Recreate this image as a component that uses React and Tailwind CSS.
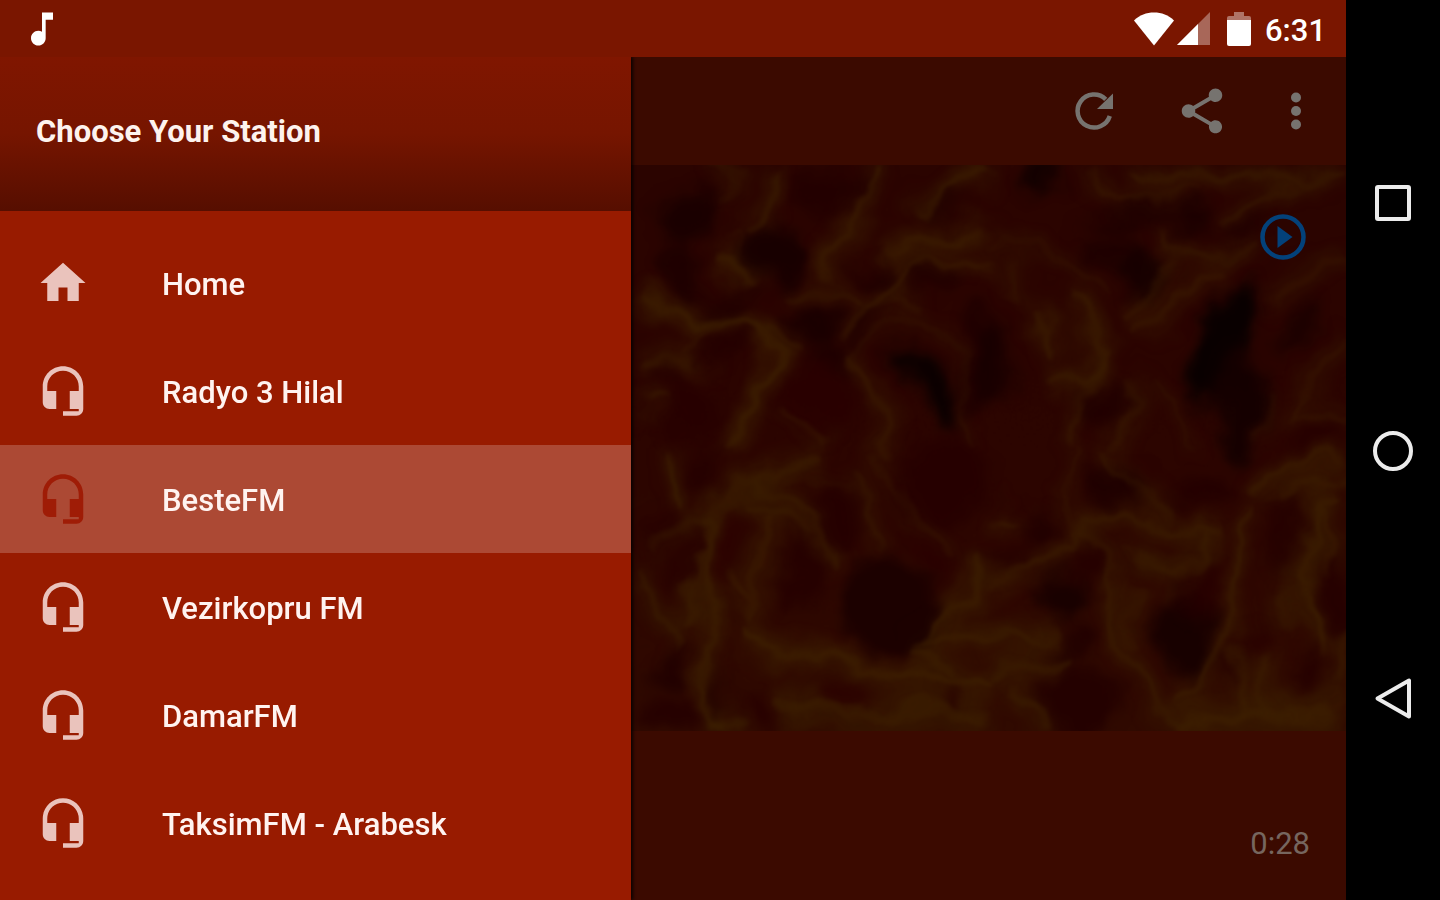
import React from "react";

const stations = [
  { name: "Home", icon: "home" },
  { name: "Radyo 3 Hilal", icon: "headset" },
  { name: "BesteFM", icon: "headset", selected: true },
  { name: "Vezirkopru FM", icon: "headset" },
  { name: "DamarFM", icon: "headset" },
  { name: "TaksimFM - Arabesk", icon: "headset" },
];

const iconPaths = {
  home: "M10 20v-6h4v6h5v-8h3L12 3 2 12h3v8z",
  headset:
    "M12 1c-4.97 0-9 4.03-9 9v7c0 1.66 1.34 3 3 3h3v-8H5v-2c0-3.87 3.13-7 7-7s7 3.13 7 7v2h-4v8h4v1h-7v2h6c1.66 0 3-1.34 3-3V10c0-4.97-4.03-9-9-9z",
  note: "M12 3v10.55c-.59-.34-1.27-.55-2-.55-2.21 0-4 1.79-4 4s1.79 4 4 4 4-1.79 4-4V7h4V3h-6z",
  share:
    "M18 16.08c-.76 0-1.44.3-1.96.77L8.91 12.7c.05-.23.09-.46.09-.7s-.04-.47-.09-.7l7.05-4.11c.54.5 1.25.81 2.04.81 1.66 0 3-1.34 3-3s-1.34-3-3-3-3 1.34-3 3c0 .24.04.47.09.7L8.04 9.81C7.5 9.31 6.79 9 6 9c-1.66 0-3 1.34-3 3s1.34 3 3 3c.79 0 1.5-.31 2.04-.81l7.12 4.16c-.05.21-.08.43-.08.65 0 1.61 1.31 2.92 2.92 2.92 1.61 0 2.92-1.31 2.92-2.92s-1.31-2.92-2.92-2.92z",
};

function Icon({ name, className }) {
  return (
    <svg viewBox="0 0 24 24" fill="currentColor" aria-hidden="true" className={className}>
      <path d={iconPaths[name]} />
    </svg>
  );
}

/* Each quadrant lists soft dark pockets [cx, cy, rx, ry, rotation, colour]
   and glowing wisps [path, stroke width, opacity]. */
const quadrants = [
  {
    x: 0,
    y: 0,
    pockets: [
      [170, 170, 100, 70, -20, "#170000"],
      [150, 340, 50, 90, 0, "#1c0000"],
      [440, 290, 110, 80, 20, "#150000"],
      [600, 90, 120, 60, 0, "#220000"],
      [930, 140, 70, 30, -20, "#200000"],
      [550, 490, 80, 50, 0, "#180000"],
      [600, 600, 70, 50, 30, "#1c0000"],
      [290, 420, 90, 40, -10, "#200000"],
      [300, 540, 90, 40, -20, "#230000"],
      [720, 350, 60, 25, 0, "#1c0000"],
      [900, 350, 90, 28, 5, "#1e0000"],
      [700, 500, 30, 80, 30, "#200000"],
      [900, 670, 45, 150, -35, "#050000"],
      [110, 650, 60, 28, -5, "#240000"],
      [170, 760, 90, 80, 0, "#270000"],
      [560, 720, 90, 110, 0, "#290000"],
      [1050, 600, 60, 160, 0, "#1e0000"],
    ],
    wisps: [
      ["M230 20 Q240 60 300 30 M320 20 Q300 90 280 140", 26, 0.6],
      ["M420 20 Q430 130 365 205", 44, 0.7],
      ["M740 20 Q700 140 660 200 Q620 300 590 360", 44, 0.8],
      ["M1080 30 Q900 90 860 170 M1080 210 Q880 230 740 300", 48, 0.8],
      ["M1080 320 Q900 280 810 340 Q740 390 690 470 L640 520", 30, 0.9],
      ["M260 270 Q340 310 350 370 M20 440 Q150 460 200 490 Q310 440 390 500 Q470 560 400 700 Q370 800 280 870", 50, 0.9],
      ["M390 480 Q440 540 500 560 M470 410 Q560 380 690 430", 26, 0.75],
      ["M180 580 Q230 480 310 465", 14, 0.8],
      ["M20 610 Q150 620 230 590 M20 740 L80 740", 50, 0.65],
      ["M680 620 Q690 560 760 500 Q910 450 970 560 Q1020 660 1030 870", 20, 0.5],
      ["M660 610 Q740 620 740 720 Q740 800 790 870 M480 760 Q560 800 590 860", 44, 0.6],
      ["M300 220 Q360 180 330 300", 16, 0.6],
      ["M760 430 Q800 410 850 440", 60, 0.4],
    ],
  },
  {
    x: 1080,
    y: 0,
    pockets: [
      [150, 55, 60, 40, 0, "#0d0000"],
      [460, 335, 80, 60, -20, "#140000"],
      [440, 170, 170, 30, -8, "#1c0000"],
      [610, 180, 35, 50, 0, "#190000"],
      [360, 270, 90, 40, -15, "#1c0000"],
      [700, 560, 80, 200, 25, "#030000"],
      [750, 730, 60, 180, 5, "#120000"],
      [930, 500, 25, 100, 35, "#150000"],
      [20, 620, 60, 110, 0, "#170000"],
      [340, 720, 70, 60, -20, "#200000"],
      [760, 210, 90, 20, -12, "#1c0000"],
      [980, 830, 80, 35, -10, "#260000"],
    ],
    wisps: [
      ["M420 20 Q450 70 530 60 Q700 30 900 60 Q1000 80 1070 50", 30, 0.85],
      ["M300 20 Q300 110 420 125 Q540 130 600 90", 34, 0.6],
      ["M900 80 Q800 130 680 190 M820 260 Q700 300 600 290 Q560 250 530 200", 28, 0.75],
      ["M0 255 L100 255 Q200 270 330 380", 28, 0.45],
      ["M560 290 Q520 370 400 460 M700 330 Q560 420 420 520", 46, 0.55],
      ["M110 450 Q190 500 210 590 M240 420 Q280 450 310 550 L350 580 Q330 640 180 670", 42, 0.8],
      ["M350 600 Q260 700 230 860 M410 660 Q430 750 380 860", 36, 0.6],
      ["M470 660 Q560 760 600 860 M820 690 Q830 750 800 830", 34, 0.35],
      ["M1070 280 Q960 350 850 420 M1070 550 Q950 650 900 760 L1070 780", 42, 0.45],
      ["M40 300 Q100 380 50 420", 60, 0.35],
    ],
  },
  {
    x: 0,
    y: 870,
    pockets: [
      [220, 70, 30, 80, 10, "#230000"],
      [620, 200, 70, 110, -20, "#240000"],
      [510, 360, 45, 120, 0, "#240000"],
      [780, 480, 170, 130, 15, "#190000"],
      [930, 90, 130, 140, 0, "#260000"],
      [170, 330, 35, 90, 15, "#270000"],
      [280, 290, 25, 110, 0, "#2b0000"],
      [120, 660, 60, 50, 0, "#200000"],
      [130, 790, 110, 50, 0, "#240000"],
      [275, 720, 20, 80, -15, "#200000"],
      [390, 790, 35, 70, -30, "#270000"],
      [650, 740, 90, 40, 0, "#2a0000"],
      [940, 750, 25, 50, 10, "#260000"],
      [90, 240, 40, 50, -30, "#270000"],
      [900, 330, 90, 40, 45, "#290000"],
    ],
    wisps: [
      ["M130 0 L130 190 M570 20 Q470 60 380 100 Q250 140 220 260 Q200 400 160 560", 40, 0.85],
      ["M220 230 Q250 480 220 620 Q230 760 300 830", 44, 0.9],
      ["M380 110 Q560 150 590 360 M330 150 Q460 180 540 260", 46, 0.7],
      ["M400 190 Q420 380 350 520 M320 360 L400 460", 80, 0.55],
      ["M80 280 L150 230 L210 240 M20 340 Q90 480 130 610", 34, 0.75],
      ["M330 560 Q500 640 650 620 Q760 700 1080 700", 52, 0.9],
      ["M740 0 Q830 160 960 330", 26, 0.55],
      ["M690 60 Q720 200 780 320", 44, 0.45],
      ["M1080 320 Q1000 500 890 580 L1080 560", 52, 0.85],
      ["M260 820 L330 820 M450 770 Q620 800 850 790 L1080 810", 84, 0.75],
      ["M480 90 Q620 70 690 130", 16, 0.6],
      ["M860 600 L960 670", 70, 0.7],
    ],
  },
  {
    x: 1080,
    y: 870,
    pockets: [
      [370, 110, 90, 50, 10, "#1d0000"],
      [150, 230, 50, 60, 0, "#200000"],
      [310, 330, 45, 70, -15, "#250000"],
      [230, 440, 80, 70, 30, "#150000"],
      [590, 560, 90, 120, -15, "#140000"],
      [620, 430, 45, 80, 0, "#270000"],
      [640, 130, 90, 50, 0, "#230000"],
      [890, 240, 30, 120, 0, "#230000"],
      [1030, 450, 50, 110, 0, "#240000"],
      [735, 640, 28, 60, 0, "#240000"],
      [260, 750, 130, 90, 20, "#220000"],
      [970, 660, 40, 60, 0, "#240000"],
      [790, 560, 50, 30, 0, "#280000"],
      [70, 330, 60, 30, -10, "#240000"],
      [250, 590, 80, 40, 0, "#200000"],
    ],
    wisps: [
      ["M270 0 Q210 100 240 200 L280 240", 22, 0.6],
      ["M360 0 Q370 100 490 140 L570 190", 30, 0.75],
      ["M270 220 Q350 180 450 200 Q560 240 690 240", 36, 0.85],
      ["M260 230 Q380 260 375 430 Q380 580 430 660 Q470 770 570 800", 30, 0.85],
      ["M420 300 Q500 310 560 400 Q620 320 640 250", 50, 0.75],
      ["M800 190 Q740 270 745 350 Q700 450 715 560 Q680 680 570 750", 34, 0.9],
      ["M790 140 Q830 50 1060 20 M850 160 Q900 90 1060 80", 42, 0.8],
      ["M1060 130 Q950 150 950 330 Q940 500 1000 600", 54, 0.85],
      ["M1000 170 L1010 380", 70, 0.5],
      ["M740 580 Q780 700 760 800 M820 610 L830 800", 62, 0.65],
      ["M560 820 L1060 790", 90, 0.85],
      ["M0 410 Q120 350 250 300 L250 230 M20 200 L80 210", 36, 0.8],
      ["M0 560 Q130 560 190 540 M0 680 Q100 620 240 640 M60 720 Q150 760 180 840", 56, 0.7],
      ["M440 400 Q420 500 440 600 M900 400 L890 560", 56, 0.45],
      ["M1060 520 L1050 720", 40, 0.7],
    ],
  },
];

function Wisps({ spread, strength }) {
  return quadrants.map((q) => (
    <g key={`${q.x}-${q.y}`} transform={`translate(${q.x} ${q.y})`}>
      {q.wisps.map(([d, width, opacity]) => (
        <path key={d} d={d} strokeWidth={width * spread} opacity={opacity * strength} />
      ))}
    </g>
  ));
}

const filterArea = {
  filterUnits: "userSpaceOnUse",
  x: -100,
  y: -100,
  width: 2360,
  height: 1940,
  colorInterpolationFilters: "sRGB",
};

function FlameArtwork() {
  return (
    <svg
      viewBox="3 15 2145 1698"
      preserveAspectRatio="xMidYMid slice"
      role="img"
      aria-label="Flames"
      className="h-full w-full"
    >
      <defs>
        <linearGradient id="ember" x1="0" y1="0" x2="0" y2="1">
          <stop offset="0" stopColor="#2b0400" />
          <stop offset="0.5" stopColor="#2c0500" />
          <stop offset="1" stopColor="#310b00" />
        </linearGradient>
        <filter id="pocketBlur" {...filterArea}>
          <feGaussianBlur stdDeviation="22" />
        </filter>
        <filter id="haloBlur" {...filterArea}>
          <feGaussianBlur stdDeviation="22" />
        </filter>
        <filter id="coreBlur" {...filterArea}>
          <feGaussianBlur stdDeviation="8" />
        </filter>
        <filter id="smoke" {...filterArea}>
          <feTurbulence type="fractalNoise" baseFrequency="0.006" numOctaves="3" seed="4" result="noise" />
          <feDisplacementMap in="SourceGraphic" in2="noise" scale="120" xChannelSelector="R" yChannelSelector="G" />
          <feGaussianBlur stdDeviation="3" />
        </filter>
      </defs>
      <rect x="0" y="0" width="2160" height="1740" fill="url(#ember)" />
      <g filter="url(#smoke)">
        <rect x="-100" y="-100" width="2360" height="1940" fill="url(#ember)" />
        <g fill="none" stroke="#391c00" strokeLinejoin="round" filter="url(#haloBlur)">
          <Wisps spread={1.5} strength={0.85} />
        </g>
        <g filter="url(#pocketBlur)">
          {quadrants.map((q) => (
            <g key={`${q.x}-${q.y}`} transform={`translate(${q.x} ${q.y})`}>
              {q.pockets.map(([cx, cy, rx, ry, turn, fill]) => (
                <ellipse
                  key={`${cx}-${cy}`}
                  cx={cx}
                  cy={cy}
                  rx={rx}
                  ry={ry}
                  fill={fill}
                  opacity="0.85"
                  transform={`rotate(${turn} ${cx} ${cy})`}
                />
              ))}
            </g>
          ))}
        </g>
        <g fill="none" stroke="#3f2100" strokeLinejoin="round" filter="url(#coreBlur)">
          <Wisps spread={0.4} strength={0.6} />
        </g>
      </g>
    </svg>
  );
}

function StatusBar() {
  return (
    <header className="relative z-20 flex h-[57px] shrink-0 items-center bg-[#7a1600] pl-5 pr-5 text-white">
      <Icon name="note" className="size-11" />
      <div className="ml-auto flex items-center">
        <svg viewBox="0 0 40 34" className="h-[34px] w-10" fill="currentColor" role="img" aria-label="Wi-Fi">
          <path d="M20 33.5 0 8.500C5.500 3 12.500 .5 20 .5S34.500 3 40 8.500z" />
        </svg>
        <svg viewBox="0 0 33 33" className="ml-[3px] h-[33px] w-[33px]" fill="currentColor" role="img" aria-label="Signal">
          <path d="M0 33 33 0V33z" opacity="0.35" />
          <path d="M0 33 21 12V33z" />
        </svg>
        <svg viewBox="0 0 24 34" className="ml-[17px] h-[34px] w-6" fill="currentColor" role="img" aria-label="Battery">
          <path d="M7 0h10v4h5q2 0 2 2v3H0V6q0-2 2-2h5z" opacity="0.4" />
          <path d="M0 8h24v24q0 2-2 2H2q-2 0-2-2z" />
        </svg>
        <time className="ml-[14px] pt-1 text-[31px] leading-9 font-medium">6:31</time>
      </div>
    </header>
  );
}

function Drawer() {
  return (
    <aside className="z-10 flex w-[631px] shrink-0 flex-col bg-[#981b00] shadow-[2px_0_3px_#000000cc]">
      <h1 className="flex h-[154px] shrink-0 items-center bg-linear-to-b from-[#801600] via-[#761500] to-[#560e00] pl-9 text-[31px] leading-9 font-bold text-[#fdf3ee]">
        <span className="pb-1">Choose Your Station</span>
      </h1>
      <nav className="pt-[18px]" aria-label="Stations">
        <ul>
          {stations.map((s) => (
            <li key={s.name}>
              <a
                href="#"
                aria-current={s.selected ? "page" : undefined}
                className={
                  s.selected
                    ? "flex h-[108px] items-center gap-[72px] bg-[#ac4934] px-9"
                    : "flex h-[108px] items-center gap-[72px] px-9"
                }
              >
                <Icon
                  name={s.icon}
                  className={s.selected ? "size-[54px] text-[#9f1c06]" : "size-[54px] text-[#eac3bc]"}
                />
                <span className="pt-1 text-[31px] leading-9 font-medium text-[#fff3f0]">{s.name}</span>
              </a>
            </li>
          ))}
        </ul>
      </nav>
    </aside>
  );
}

function Player() {
  return (
    <main className="flex min-w-0 flex-1 flex-col bg-[#3b0a00]">
      <div className="flex h-[108px] shrink-0 items-center justify-end pr-[10px] text-[#76736f]">
        <button type="button" aria-label="Refresh" className="flex h-full w-[108px] items-center justify-center">
          <svg viewBox="0 0 54 54" className="size-[54px]" aria-hidden="true">
            <path
              d="M42.800 32A16.500 16.500 0 1 1 38.700 15.300"
              fill="none"
              stroke="currentColor"
              strokeWidth="4.5"
            />
            <path d="M46 9.500V25H30z" fill="currentColor" />
          </svg>
        </button>
        <button type="button" aria-label="Share" className="flex h-full w-[108px] items-center justify-center">
          <Icon name="share" className="size-[54px]" />
        </button>
        <button type="button" aria-label="More options" className="flex h-full w-20 items-center justify-center">
          <svg viewBox="0 0 54 54" className="size-[54px]" fill="currentColor" aria-hidden="true">
            <circle cx="27" cy="13.5" r="5" />
            <circle cx="27" cy="27" r="5" />
            <circle cx="27" cy="40.5" r="5" />
          </svg>
        </button>
      </div>
      <div className="relative h-[566px] shrink-0 overflow-hidden">
        <FlameArtwork />
        <button type="button" aria-label="Play" className="absolute right-9 top-[45px] text-[#03417a]">
          <svg viewBox="0 0 54 54" className="size-[54px]" aria-hidden="true">
            <circle cx="27" cy="27" r="20.5" fill="none" stroke="currentColor" strokeWidth="4.5" />
            <path d="M21.500 16v22L36.500 27z" fill="currentColor" />
          </svg>
        </button>
      </div>
      <div className="flex flex-1 items-center justify-end pr-9 pt-14 text-[31px] leading-9 text-[#76665f]">
        <time>0:28</time>
      </div>
    </main>
  );
}

function NavigationBar() {
  const buttons = [
    { label: "Overview", shape: <rect x="11" y="11" width="32" height="32" rx="1" /> },
    { label: "Home", shape: <circle cx="27" cy="27" r="18" /> },
    { label: "Back", shape: <path d="M11.500 26.500 43 8.500V44.500z" /> },
  ];
  return (
    <nav aria-label="System" className="flex w-[94px] shrink-0 flex-col items-center justify-center bg-black pt-0.5 text-[#ececec]">
      {buttons.map((b) => (
        <button key={b.label} type="button" aria-label={b.label} className="flex h-[248px] w-full items-center justify-center">
          <svg
            viewBox="0 0 54 54"
            className="size-[54px]"
            fill="none"
            stroke="currentColor"
            strokeWidth="4"
            strokeLinejoin="round"
            aria-hidden="true"
          >
            {b.shape}
          </svg>
        </button>
      ))}
    </nav>
  );
}

export default function App() {
  return (
    <div className="flex min-h-screen bg-black font-[Roboto,sans-serif]">
      <div className="flex min-w-0 flex-1 flex-col">
        <StatusBar />
        <div className="flex flex-1">
          <Drawer />
          <Player />
        </div>
      </div>
      <NavigationBar />
    </div>
  );
}
